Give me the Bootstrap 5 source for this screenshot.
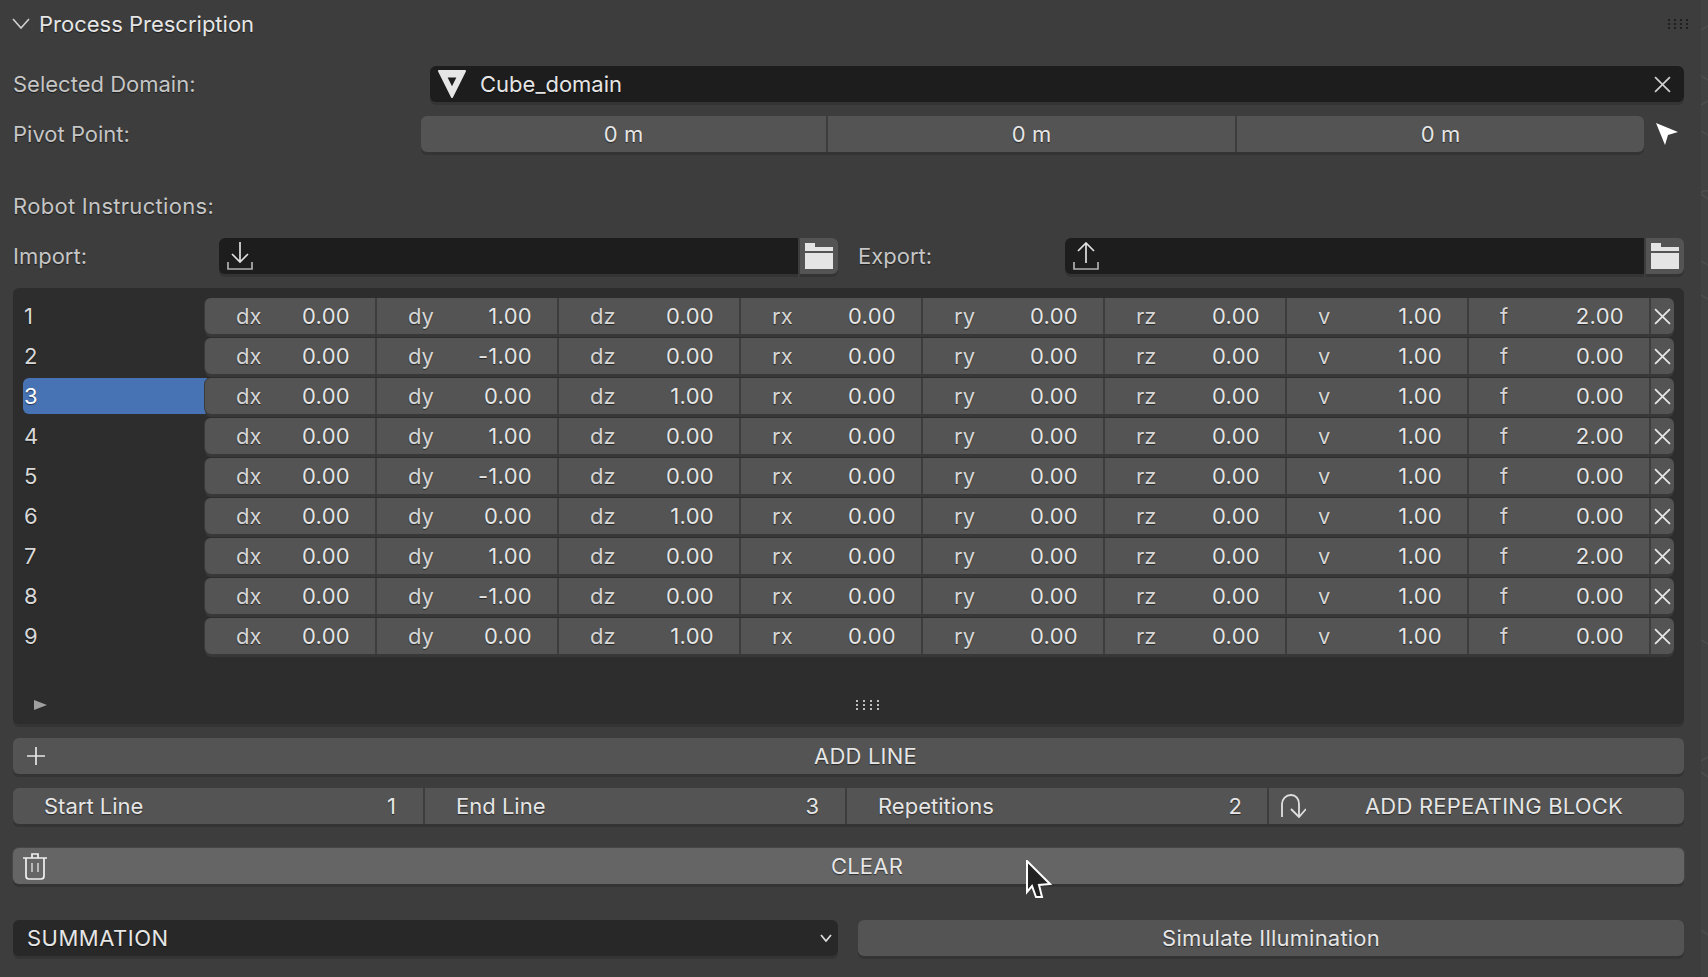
<!DOCTYPE html>
<html lang="en">
<head>
<meta charset="utf-8">
<title>Process Prescription</title>
<link href="https://cdn.jsdelivr.net/npm/bootstrap@5.3.0/dist/css/bootstrap.min.css" rel="stylesheet">
<style>
html,body{height:977px;overflow:hidden;background:#3d3d3d}
body{font-family:Inter,"Noto Sans",sans-serif;font-size:22px;line-height:1;color:#e6e6e6;text-shadow:0 1px 1px rgba(0,0,0,.55)}
.bl-page{width:1708px;height:977px}
.bl-main{width:1701px;padding:0 17px 0 13px}
.bl-strip{width:7px;background:#424242}
.bl-strip svg{display:block}
.bl-head{height:48px}
.bl-title{margin-left:9px;color:#e6e6e6}
.bl-chev{margin-left:-1px;width:18px;height:12px}
.bl-h36{height:36px}
.bl-lbl{color:#c6c6c6}
.bl-robot{letter-spacing:.3px}
.bl-mt13{margin-top:13px}.bl-mt14{margin-top:14px}.bl-mt18{margin-top:18px}.bl-mt24{margin-top:24px}.bl-mt36{margin-top:36px}
.bl-w417{width:417px}.bl-w408{width:408px}.bl-w206{width:206px}
.bl-dark{background:#1d1d1d;border-radius:6px;box-shadow:0 3px 0 #343434}
.bl-dark-l{border-radius:6px 0 0 6px}
.bl-gray{background:#545454;border-radius:6px;box-shadow:0 3px 0 #343434;color:#e6e6e6}
.bl-domain{width:1254px;padding:0 13px 0 7px}
.bl-domain .bl-name{margin-left:13px}
.bl-pivot{width:1223px}
.bl-seg{border-right:2px solid #3d3d3d}
.bl-seg-a{width:407px}.bl-seg-b{width:409px}
.bl-seg-c{flex:1 1 0;border-right:0}
.bl-curs{margin-left:12px;width:22px;height:22px}
.bl-file{width:580px;padding-left:8px}
.bl-folder{width:38px;margin-left:2px;border-radius:0 6px 6px 0}
.bl-file2{width:580px;padding-left:8px}
.bl-box{height:436px;background:#2d2d2d;border-radius:6px;box-shadow:0 3px 0 #343434;padding:10px 10px 0}
.bl-item{height:36px;margin-bottom:4px}
.bl-num{width:182px;padding-left:1px;color:#d8d8d8}
.bl-sel{background:#4772b3;border-radius:6px 0 0 6px;color:#fff;margin-right:-2px;width:184px;padding-left:1px}
.bl-cells{background:#545454;border-radius:6px;box-shadow:0 3px 0 #383838,-1px 0 0 #3a3a3a;position:relative}
.bl-cell{width:182px;border-right:2px solid #3d3d3d;padding-right:25px;padding-left:31px}
.bl-first{width:172px}
.bl-key{color:#d6d6d6}
.bl-val{margin-left:auto;letter-spacing:.3px}
.bl-del{width:23px}
.bl-foot{height:70px;padding-left:11px;padding-top:42px;position:relative}
.bl-tri{width:13px;height:10px}
.bl-grip{margin-left:809px;width:23px;height:10px}
.btn.bl-btn{--bs-btn-padding-x:0;--bs-btn-padding-y:0;--bs-btn-border-width:0;--bs-btn-border-radius:6px;--bs-btn-font-size:22px;--bs-btn-line-height:1;background:#545454;color:#e6e6e6;box-shadow:0 3px 0 #343434;height:36px;text-shadow:inherit;font-family:inherit;letter-spacing:.2px}
.btn.bl-hot{background:#656565;box-shadow:0 3px 0 #343434,0 0 0 1px #474747}
.bl-ico{width:34px;padding-left:14px}
.bl-ico2{width:37px;padding-left:10px}
.bl-flex1{flex:1 1 0}
.bl-p-start{padding:0 27px 0 31px;width:412px;border-right:2px solid #3d3d3d}
.bl-p-end{padding:0 26px 0 31px;width:422px;border-right:2px solid #3d3d3d}
.bl-p-rep{padding:0 25px 0 31px;width:422px;border-right:2px solid #3d3d3d}
.bl-p-add{flex:1 1 0;padding-left:11px}
.bl-add-txt{flex:1 1 0;text-align:center;letter-spacing:.2px;padding-right:2px}
.bl-select{width:825px;background:#282828;border-radius:6px;box-shadow:0 3px 0 #343434;padding:0 6px 0 14px}
.bl-sumtxt{letter-spacing:.5px}
.bl-sim{width:826px;margin-left:20px}
.bl-cursor{position:absolute;left:1026px;top:860px;width:26px;height:38px;pointer-events:none}
</style>
</head>
<body>
<div class="bl-page d-flex position-relative">
<div class="bl-main">
  <div class="bl-head d-flex align-items-center">
    <svg class="bl-chev" viewBox="0 0 18 12"><polyline points="1,1 9,10 17,1" fill="none" stroke="#d0d0d0" stroke-width="1.6"/></svg>
    <span class="bl-title">Process Prescription</span>
    <svg class="ms-auto" width="20" height="11" viewBox="0 0 20 11" style="margin-right:-4px"><g fill="#1f1f1f"><rect y="0" width="2" height="2"/><rect x="6" width="2" height="2"/><rect x="12" width="2" height="2"/><rect x="18" width="2" height="2"/><rect y="4" width="2" height="2"/><rect x="6" y="4" width="2" height="2"/><rect x="12" y="4" width="2" height="2"/><rect x="18" y="4" width="2" height="2"/><rect y="8" width="2" height="2"/><rect x="6" y="8" width="2" height="2"/><rect x="12" y="8" width="2" height="2"/><rect x="18" y="8" width="2" height="2"/></g></svg>
  </div>

  <div class="d-flex align-items-center bl-h36 bl-mt18">
    <div class="bl-lbl bl-w417">Selected Domain:</div>
    <div class="bl-domain bl-dark d-flex align-items-center bl-h36">
      <svg width="30" height="30" viewBox="0 0 30 30"><path fill-rule="evenodd" fill="#e6e6e6" stroke="#e6e6e6" stroke-width="2" stroke-linejoin="round" d="M2 2H28L15 28ZM9 7.500L15 19.500L21 7.500Z"/></svg>
      <span class="bl-name">Cube_domain</span>
      <svg class="ms-auto" width="17" height="17" viewBox="0 0 16 16"><path d="M1 1L15 15M15 1L1 15" stroke="#cfcfcf" stroke-width="1.6"/></svg>
    </div>
  </div>

  <div class="d-flex align-items-center bl-h36 bl-mt14">
    <div class="bl-lbl bl-w408">Pivot Point:</div>
    <div class="bl-pivot bl-gray d-flex bl-h36 text-center">
      <div class="bl-seg bl-seg-a d-flex align-items-center justify-content-center">0 m</div>
      <div class="bl-seg bl-seg-b d-flex align-items-center justify-content-center">0 m</div>
      <div class="bl-seg bl-seg-c d-flex align-items-center justify-content-center">0 m</div>
    </div>
    <svg class="bl-curs" viewBox="0 0 22 22"><path d="M0 0L22 9L12 12L9 22Z" fill="#fff"/></svg>
  </div>

  <div class="bl-lbl bl-robot d-flex align-items-center bl-h36 bl-mt36">Robot Instructions:</div>

  <div class="d-flex align-items-center bl-h36 bl-mt14">
    <div class="bl-lbl bl-w206">Import:</div>
    <div class="bl-file bl-dark bl-dark-l d-flex align-items-center bl-h36">
      <svg width="26" height="28" viewBox="0 0 26 28"><path d="M13 0V20M5 12L13 20L21 12" fill="none" stroke="#e0e0e0" stroke-width="1.7"/><path d="M1 20V27H25V20" fill="none" stroke="#b0b0b0" stroke-width="1.7"/></svg>
    </div>
    <div class="bl-folder bl-gray d-flex align-items-center justify-content-center bl-h36">
      <svg width="28" height="26" viewBox="0 0 28 26"><path d="M0 0H10V4H28V8H0ZM0 10H28V26H0Z" fill="#e4e4e4"/></svg>
    </div>
    <div class="bl-lbl" style="margin-left:20px;width:207px">Export:</div>
    <div class="bl-file2 bl-dark bl-dark-l d-flex align-items-center bl-h36">
      <svg width="26" height="28" viewBox="0 0 26 28"><path d="M13 21V1M5 9L13 1L21 9" fill="none" stroke="#e0e0e0" stroke-width="1.7"/><path d="M1 20V27H25V20" fill="none" stroke="#b0b0b0" stroke-width="1.7"/></svg>
    </div>
    <div class="bl-folder bl-gray d-flex align-items-center justify-content-center bl-h36">
      <svg width="28" height="26" viewBox="0 0 28 26"><path d="M0 0H10V4H28V8H0ZM0 10H28V26H0Z" fill="#e4e4e4"/></svg>
    </div>
  </div>

  <div class="bl-box bl-mt14">
    <div class="bl-item d-flex align-items-center"><div class="bl-num">1</div><div class="bl-cells d-flex h-100"><div class="bl-cell bl-first d-flex align-items-center"><span class="bl-key">dx</span><span class="bl-val">0.00</span></div><div class="bl-cell d-flex align-items-center"><span class="bl-key">dy</span><span class="bl-val">1.00</span></div><div class="bl-cell d-flex align-items-center"><span class="bl-key">dz</span><span class="bl-val">0.00</span></div><div class="bl-cell d-flex align-items-center"><span class="bl-key">rx</span><span class="bl-val">0.00</span></div><div class="bl-cell d-flex align-items-center"><span class="bl-key">ry</span><span class="bl-val">0.00</span></div><div class="bl-cell d-flex align-items-center"><span class="bl-key">rz</span><span class="bl-val">0.00</span></div><div class="bl-cell d-flex align-items-center"><span class="bl-key">v</span><span class="bl-val">1.00</span></div><div class="bl-cell d-flex align-items-center"><span class="bl-key">f</span><span class="bl-val">2.00</span></div><div class="bl-del d-flex align-items-center justify-content-center"><svg width="17" height="17" viewBox="0 0 16 16"><path d="M1 1L15 15M15 1L1 15" stroke="#e6e6e6" stroke-width="1.7"/></svg></div></div></div>
    <div class="bl-item d-flex align-items-center"><div class="bl-num">2</div><div class="bl-cells d-flex h-100"><div class="bl-cell bl-first d-flex align-items-center"><span class="bl-key">dx</span><span class="bl-val">0.00</span></div><div class="bl-cell d-flex align-items-center"><span class="bl-key">dy</span><span class="bl-val">-1.00</span></div><div class="bl-cell d-flex align-items-center"><span class="bl-key">dz</span><span class="bl-val">0.00</span></div><div class="bl-cell d-flex align-items-center"><span class="bl-key">rx</span><span class="bl-val">0.00</span></div><div class="bl-cell d-flex align-items-center"><span class="bl-key">ry</span><span class="bl-val">0.00</span></div><div class="bl-cell d-flex align-items-center"><span class="bl-key">rz</span><span class="bl-val">0.00</span></div><div class="bl-cell d-flex align-items-center"><span class="bl-key">v</span><span class="bl-val">1.00</span></div><div class="bl-cell d-flex align-items-center"><span class="bl-key">f</span><span class="bl-val">0.00</span></div><div class="bl-del d-flex align-items-center justify-content-center"><svg width="17" height="17" viewBox="0 0 16 16"><path d="M1 1L15 15M15 1L1 15" stroke="#e6e6e6" stroke-width="1.7"/></svg></div></div></div>
    <div class="bl-item d-flex align-items-center"><div class="bl-num bl-sel h-100 d-flex align-items-center">3</div><div class="bl-cells d-flex h-100"><div class="bl-cell bl-first d-flex align-items-center"><span class="bl-key">dx</span><span class="bl-val">0.00</span></div><div class="bl-cell d-flex align-items-center"><span class="bl-key">dy</span><span class="bl-val">0.00</span></div><div class="bl-cell d-flex align-items-center"><span class="bl-key">dz</span><span class="bl-val">1.00</span></div><div class="bl-cell d-flex align-items-center"><span class="bl-key">rx</span><span class="bl-val">0.00</span></div><div class="bl-cell d-flex align-items-center"><span class="bl-key">ry</span><span class="bl-val">0.00</span></div><div class="bl-cell d-flex align-items-center"><span class="bl-key">rz</span><span class="bl-val">0.00</span></div><div class="bl-cell d-flex align-items-center"><span class="bl-key">v</span><span class="bl-val">1.00</span></div><div class="bl-cell d-flex align-items-center"><span class="bl-key">f</span><span class="bl-val">0.00</span></div><div class="bl-del d-flex align-items-center justify-content-center"><svg width="17" height="17" viewBox="0 0 16 16"><path d="M1 1L15 15M15 1L1 15" stroke="#e6e6e6" stroke-width="1.7"/></svg></div></div></div>
    <div class="bl-item d-flex align-items-center"><div class="bl-num">4</div><div class="bl-cells d-flex h-100"><div class="bl-cell bl-first d-flex align-items-center"><span class="bl-key">dx</span><span class="bl-val">0.00</span></div><div class="bl-cell d-flex align-items-center"><span class="bl-key">dy</span><span class="bl-val">1.00</span></div><div class="bl-cell d-flex align-items-center"><span class="bl-key">dz</span><span class="bl-val">0.00</span></div><div class="bl-cell d-flex align-items-center"><span class="bl-key">rx</span><span class="bl-val">0.00</span></div><div class="bl-cell d-flex align-items-center"><span class="bl-key">ry</span><span class="bl-val">0.00</span></div><div class="bl-cell d-flex align-items-center"><span class="bl-key">rz</span><span class="bl-val">0.00</span></div><div class="bl-cell d-flex align-items-center"><span class="bl-key">v</span><span class="bl-val">1.00</span></div><div class="bl-cell d-flex align-items-center"><span class="bl-key">f</span><span class="bl-val">2.00</span></div><div class="bl-del d-flex align-items-center justify-content-center"><svg width="17" height="17" viewBox="0 0 16 16"><path d="M1 1L15 15M15 1L1 15" stroke="#e6e6e6" stroke-width="1.7"/></svg></div></div></div>
    <div class="bl-item d-flex align-items-center"><div class="bl-num">5</div><div class="bl-cells d-flex h-100"><div class="bl-cell bl-first d-flex align-items-center"><span class="bl-key">dx</span><span class="bl-val">0.00</span></div><div class="bl-cell d-flex align-items-center"><span class="bl-key">dy</span><span class="bl-val">-1.00</span></div><div class="bl-cell d-flex align-items-center"><span class="bl-key">dz</span><span class="bl-val">0.00</span></div><div class="bl-cell d-flex align-items-center"><span class="bl-key">rx</span><span class="bl-val">0.00</span></div><div class="bl-cell d-flex align-items-center"><span class="bl-key">ry</span><span class="bl-val">0.00</span></div><div class="bl-cell d-flex align-items-center"><span class="bl-key">rz</span><span class="bl-val">0.00</span></div><div class="bl-cell d-flex align-items-center"><span class="bl-key">v</span><span class="bl-val">1.00</span></div><div class="bl-cell d-flex align-items-center"><span class="bl-key">f</span><span class="bl-val">0.00</span></div><div class="bl-del d-flex align-items-center justify-content-center"><svg width="17" height="17" viewBox="0 0 16 16"><path d="M1 1L15 15M15 1L1 15" stroke="#e6e6e6" stroke-width="1.7"/></svg></div></div></div>
    <div class="bl-item d-flex align-items-center"><div class="bl-num">6</div><div class="bl-cells d-flex h-100"><div class="bl-cell bl-first d-flex align-items-center"><span class="bl-key">dx</span><span class="bl-val">0.00</span></div><div class="bl-cell d-flex align-items-center"><span class="bl-key">dy</span><span class="bl-val">0.00</span></div><div class="bl-cell d-flex align-items-center"><span class="bl-key">dz</span><span class="bl-val">1.00</span></div><div class="bl-cell d-flex align-items-center"><span class="bl-key">rx</span><span class="bl-val">0.00</span></div><div class="bl-cell d-flex align-items-center"><span class="bl-key">ry</span><span class="bl-val">0.00</span></div><div class="bl-cell d-flex align-items-center"><span class="bl-key">rz</span><span class="bl-val">0.00</span></div><div class="bl-cell d-flex align-items-center"><span class="bl-key">v</span><span class="bl-val">1.00</span></div><div class="bl-cell d-flex align-items-center"><span class="bl-key">f</span><span class="bl-val">0.00</span></div><div class="bl-del d-flex align-items-center justify-content-center"><svg width="17" height="17" viewBox="0 0 16 16"><path d="M1 1L15 15M15 1L1 15" stroke="#e6e6e6" stroke-width="1.7"/></svg></div></div></div>
    <div class="bl-item d-flex align-items-center"><div class="bl-num">7</div><div class="bl-cells d-flex h-100"><div class="bl-cell bl-first d-flex align-items-center"><span class="bl-key">dx</span><span class="bl-val">0.00</span></div><div class="bl-cell d-flex align-items-center"><span class="bl-key">dy</span><span class="bl-val">1.00</span></div><div class="bl-cell d-flex align-items-center"><span class="bl-key">dz</span><span class="bl-val">0.00</span></div><div class="bl-cell d-flex align-items-center"><span class="bl-key">rx</span><span class="bl-val">0.00</span></div><div class="bl-cell d-flex align-items-center"><span class="bl-key">ry</span><span class="bl-val">0.00</span></div><div class="bl-cell d-flex align-items-center"><span class="bl-key">rz</span><span class="bl-val">0.00</span></div><div class="bl-cell d-flex align-items-center"><span class="bl-key">v</span><span class="bl-val">1.00</span></div><div class="bl-cell d-flex align-items-center"><span class="bl-key">f</span><span class="bl-val">2.00</span></div><div class="bl-del d-flex align-items-center justify-content-center"><svg width="17" height="17" viewBox="0 0 16 16"><path d="M1 1L15 15M15 1L1 15" stroke="#e6e6e6" stroke-width="1.7"/></svg></div></div></div>
    <div class="bl-item d-flex align-items-center"><div class="bl-num">8</div><div class="bl-cells d-flex h-100"><div class="bl-cell bl-first d-flex align-items-center"><span class="bl-key">dx</span><span class="bl-val">0.00</span></div><div class="bl-cell d-flex align-items-center"><span class="bl-key">dy</span><span class="bl-val">-1.00</span></div><div class="bl-cell d-flex align-items-center"><span class="bl-key">dz</span><span class="bl-val">0.00</span></div><div class="bl-cell d-flex align-items-center"><span class="bl-key">rx</span><span class="bl-val">0.00</span></div><div class="bl-cell d-flex align-items-center"><span class="bl-key">ry</span><span class="bl-val">0.00</span></div><div class="bl-cell d-flex align-items-center"><span class="bl-key">rz</span><span class="bl-val">0.00</span></div><div class="bl-cell d-flex align-items-center"><span class="bl-key">v</span><span class="bl-val">1.00</span></div><div class="bl-cell d-flex align-items-center"><span class="bl-key">f</span><span class="bl-val">0.00</span></div><div class="bl-del d-flex align-items-center justify-content-center"><svg width="17" height="17" viewBox="0 0 16 16"><path d="M1 1L15 15M15 1L1 15" stroke="#e6e6e6" stroke-width="1.7"/></svg></div></div></div>
    <div class="bl-item d-flex align-items-center"><div class="bl-num">9</div><div class="bl-cells d-flex h-100"><div class="bl-cell bl-first d-flex align-items-center"><span class="bl-key">dx</span><span class="bl-val">0.00</span></div><div class="bl-cell d-flex align-items-center"><span class="bl-key">dy</span><span class="bl-val">0.00</span></div><div class="bl-cell d-flex align-items-center"><span class="bl-key">dz</span><span class="bl-val">1.00</span></div><div class="bl-cell d-flex align-items-center"><span class="bl-key">rx</span><span class="bl-val">0.00</span></div><div class="bl-cell d-flex align-items-center"><span class="bl-key">ry</span><span class="bl-val">0.00</span></div><div class="bl-cell d-flex align-items-center"><span class="bl-key">rz</span><span class="bl-val">0.00</span></div><div class="bl-cell d-flex align-items-center"><span class="bl-key">v</span><span class="bl-val">1.00</span></div><div class="bl-cell d-flex align-items-center"><span class="bl-key">f</span><span class="bl-val">0.00</span></div><div class="bl-del d-flex align-items-center justify-content-center"><svg width="17" height="17" viewBox="0 0 16 16"><path d="M1 1L15 15M15 1L1 15" stroke="#e6e6e6" stroke-width="1.7"/></svg></div></div></div>
    <div class="bl-foot d-flex align-items-start">
      <svg class="bl-tri" viewBox="0 0 13 10"><path d="M0 0L13 5L0 10Z" fill="#a0a0a0"/></svg>
      <svg class="bl-grip" viewBox="0 0 23 10"><g fill="#bdbdbd"><rect x="0" y="0" width="2" height="2"/><rect x="7" y="0" width="2" height="2"/><rect x="14" y="0" width="2" height="2"/><rect x="21" y="0" width="2" height="2"/><rect x="0" y="4" width="2" height="2"/><rect x="7" y="4" width="2" height="2"/><rect x="14" y="4" width="2" height="2"/><rect x="21" y="4" width="2" height="2"/><rect x="0" y="8" width="2" height="2"/><rect x="7" y="8" width="2" height="2"/><rect x="14" y="8" width="2" height="2"/><rect x="21" y="8" width="2" height="2"/></g></svg>
    </div>
  </div>

  <button type="button" class="btn bl-btn w-100 d-flex align-items-center bl-mt14">
    <span class="bl-ico d-flex"><svg width="18" height="18" viewBox="0 0 18 18"><path d="M9 0V18M0 9H18" stroke="#e6e6e6" stroke-width="1.7"/></svg></span>
    <span class="bl-flex1 text-center">ADD LINE</span>
    <span></span>
  </button>

  <div class="bl-gray d-flex bl-h36 bl-mt14">
    <div class="bl-p-start d-flex align-items-center justify-content-between"><span>Start Line</span><span>1</span></div>
    <div class="bl-p-end d-flex align-items-center justify-content-between"><span>End Line</span><span>3</span></div>
    <div class="bl-p-rep d-flex align-items-center justify-content-between"><span>Repetitions</span><span>2</span></div>
    <div class="bl-p-add d-flex align-items-center">
      <svg width="26" height="24" viewBox="0 0 26 24"><path d="M2 23V10C2 5 6 1 11 1C16 1 19 5 19 10V22M11 15L19 23L26 15" fill="none" stroke="#e0e0e0" stroke-width="1.8"/></svg>
      <span class="bl-add-txt">ADD REPEATING BLOCK</span>
    </div>
  </div>

  <button type="button" class="btn bl-btn bl-hot w-100 d-flex align-items-center bl-mt24">
    <span class="bl-ico2 d-flex"><svg width="24" height="27" viewBox="0 0 24 27"><path d="M0 5H24M9 5V1H15V5M3 5V23Q3 26 6 26H18Q21 26 21 23V5" fill="none" stroke="#f0f0f0" stroke-width="1.7"/><path d="M9 10V19M15 10V19" stroke="#b8b8b8" stroke-width="2"/></svg></span>
    <span class="bl-flex1 text-center">CLEAR</span>
  </button>

  <div class="d-flex bl-mt36">
    <div class="bl-select d-flex align-items-center justify-content-between bl-h36">
      <span class="bl-sumtxt">SUMMATION</span>
      <svg width="12" height="8" viewBox="0 0 12 8"><polyline points="1,1 6,7 11,1" fill="none" stroke="#e0e0e0" stroke-width="1.7"/></svg>
    </div>
    <button type="button" class="btn bl-btn bl-sim">Simulate Illumination</button>
  </div>
</div>
<div class="bl-strip">
  <svg width="7" height="977" viewBox="0 0 7 977"><g fill="none" stroke="#4e4e4e" stroke-width="1.5"><path d="M0 30L7 26M0 76L7 80M0 105L7 101M0 131L7 135M0 193Q2 190 7 191M0 194L7 199M0 261L7 265M0 295L7 299M0 640L7 644M0 761L7 757M0 772L7 777M0 930L7 935"/></g></svg>
</div>
<svg class="bl-cursor" viewBox="0 0 26 38"><path d="M1 1V32L6 26L10 37L16 37L13 25L24 24Z" fill="#222" stroke="#fff" stroke-width="2"/></svg>
</div>
<script src="https://cdn.jsdelivr.net/npm/bootstrap@5.3.0/dist/js/bootstrap.bundle.min.js"></script>
</body>
</html>
